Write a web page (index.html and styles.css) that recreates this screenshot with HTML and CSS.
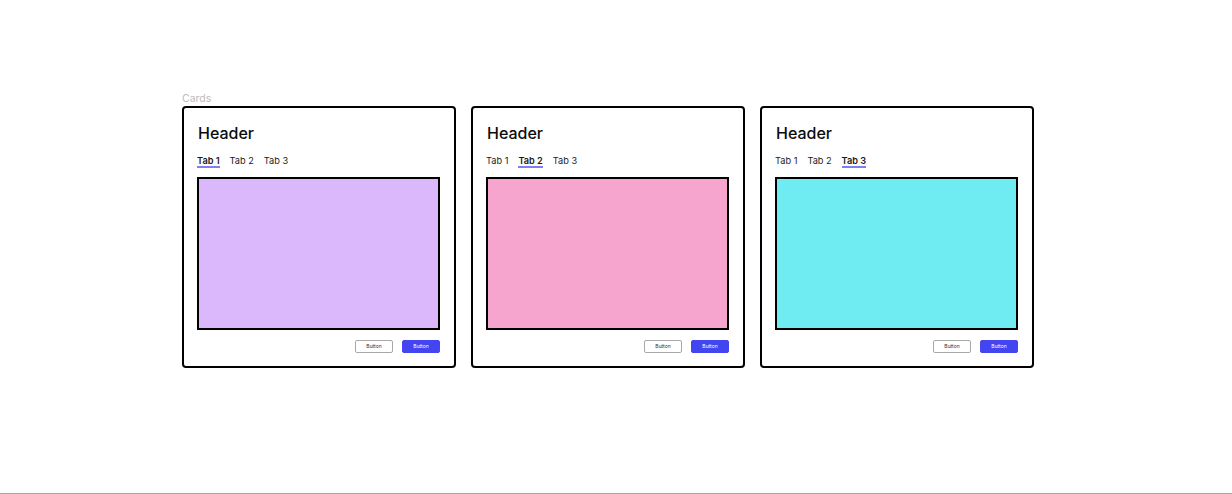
FILE: index.html
```html
<!DOCTYPE html>
<html lang="en">
<head>
<meta charset="utf-8">
<title>Cards</title>
<link rel="stylesheet" href="styles.css">
</head>
<body>
<div class="page">
  <div class="frame">
    <div class="frame-label">Cards</div>
    <div class="cards">
      <div class="card">
        <h2 class="card-title">Header</h2>
        <div class="tabs">
          <span class="tab active">Tab 1</span>
          <span class="tab">Tab 2</span>
          <span class="tab">Tab 3</span>
        </div>
        <div class="panel panel-purple"></div>
        <div class="actions">
          <button class="btn btn-outline">Button</button>
          <button class="btn btn-primary">Button</button>
        </div>
      </div>
      <div class="card">
        <h2 class="card-title">Header</h2>
        <div class="tabs">
          <span class="tab">Tab 1</span>
          <span class="tab active">Tab 2</span>
          <span class="tab">Tab 3</span>
        </div>
        <div class="panel panel-pink"></div>
        <div class="actions">
          <button class="btn btn-outline">Button</button>
          <button class="btn btn-primary">Button</button>
        </div>
      </div>
      <div class="card">
        <h2 class="card-title">Header</h2>
        <div class="tabs">
          <span class="tab">Tab 1</span>
          <span class="tab">Tab 2</span>
          <span class="tab active">Tab 3</span>
        </div>
        <div class="panel panel-cyan"></div>
        <div class="actions">
          <button class="btn btn-outline">Button</button>
          <button class="btn btn-primary">Button</button>
        </div>
      </div>
    </div>
  </div>
</div>
</body>
</html>
```

FILE: styles.css
```css
* { box-sizing: border-box; }

html, body {
  margin: 0;
  padding: 0;
  background: #ffffff;
}

body {
  font-family: "Inter", "Liberation Sans", sans-serif;
  color: #111;
}

.page {
  height: 494px;
  border-bottom: 1px solid #a6a6a6;
  padding-top: 92px;
  padding-left: 182px;
}

.frame-label {
  font-size: 10.5px;
  line-height: 14px;
  color: #bcbcbc;
  height: 14px;
}

.cards {
  display: flex;
  gap: 15px;
}

.card {
  width: 274px;
  border: 2px solid #000;
  border-radius: 4px;
  padding: 15px 14px 13px 13px;
  display: flex;
  flex-direction: column;
}

.card-title {
  margin: 0;
  font-size: 16px;
  line-height: 20px;
  font-weight: 500;
  padding-left: 1px;
  color: #0c0c0c;
}

.tabs {
  display: flex;
  gap: 10px;
  margin-top: 13px;
}

.tab {
  font-size: 9.2px;
  line-height: 10px;
  color: #1a1a1a;
  border-bottom: 2px solid transparent;
}

.tab.active {
  font-weight: 600;
  border-bottom-color: #7f7ff3;
}

.panel {
  margin-top: 9px;
  height: 153px;
  border: 2px solid #000;
}

.panel-purple { background: #dbb8fc; }
.panel-pink { background: #f6a5ce; }
.panel-cyan { background: #6eecf1; }

.actions {
  display: flex;
  justify-content: flex-end;
  gap: 9px;
  margin-top: 10px;
}

.btn {
  width: 38px;
  height: 13px;
  padding: 0;
  font-family: "Inter", "Liberation Sans", sans-serif;
  font-size: 5px;
  line-height: 11px;
  border-radius: 2px;
  cursor: pointer;
}

.btn-outline {
  background: #fff;
  border: 1px solid #a8a8a8;
  color: #333;
}

.btn-primary {
  background: #4245f0;
  border: 1px solid #4245f0;
  color: #fff;
}
```
